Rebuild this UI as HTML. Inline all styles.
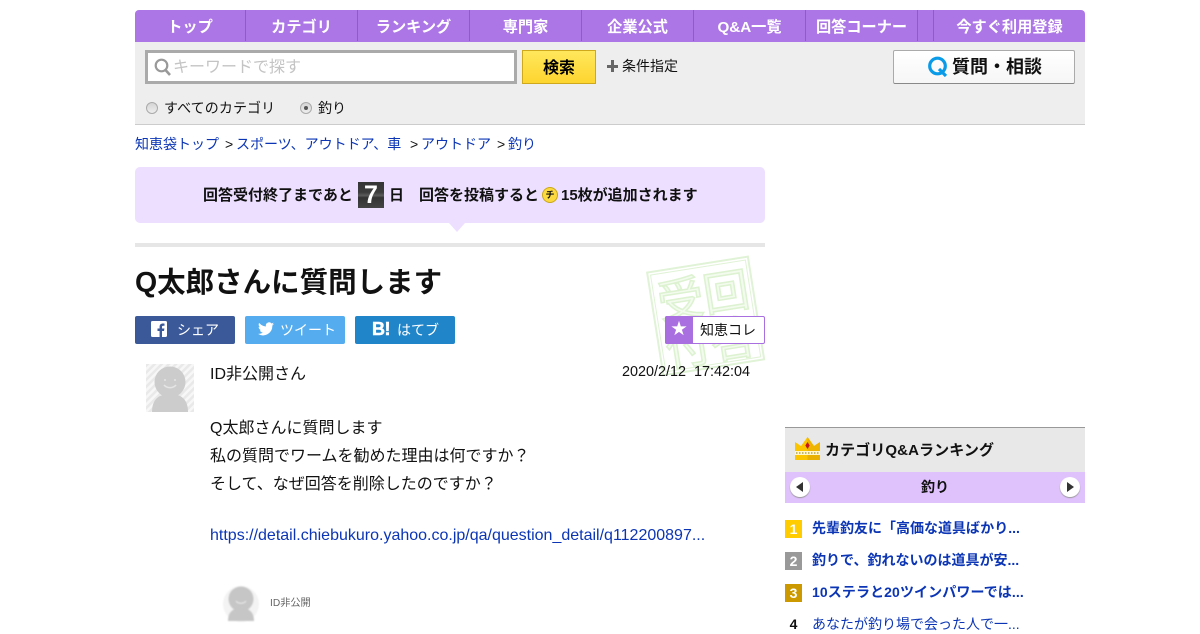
<!DOCTYPE html>
<html lang="ja"><head><meta charset="utf-8"><title>Q太郎さんに質問します</title>
<style>
html,body{margin:0;padding:0;background:#fff}
body{width:1200px;height:630px;overflow:hidden;position:relative;font-family:"Liberation Sans","Noto Sans CJK JP",sans-serif;color:#111}
.a{position:absolute;white-space:nowrap}
a{color:#0b35b5;text-decoration:none}
.nav{left:135px;top:10px;width:950px;height:32px;background:#ad76e6;border-radius:4px 4px 0 0}
.nav b{position:absolute;top:0;line-height:35px;font-size:15.2px;color:#fff;text-align:center;white-space:nowrap}
.nav i{position:absolute;top:0;width:1px;height:31px;background:#8f5cc6}
.rad{width:10px;height:10px;border:1px solid #aaa;border-radius:50%;background:linear-gradient(#d5d5d5,#eee)}
.sb{top:316px;height:28px;width:100px;border-radius:2px;color:#fff;font-size:14px;line-height:29px}
.rk{left:785px;width:17px;height:18px;color:#fff;font-weight:bold;font-size:14px;line-height:19px;text-align:center}
.rt{left:812px;font-size:14px;line-height:20px}
</style></head><body>
<div class="a nav">
<b style="left:0;width:110px">トップ</b><i style="left:110px"></i>
<b style="left:111px;width:111px">カテゴリ</b><i style="left:222px"></i>
<b style="left:223px;width:111px">ランキング</b><i style="left:334px"></i>
<b style="left:335px;width:111px">専門家</b><i style="left:446px"></i>
<b style="left:447px;width:111px">企業公式</b><i style="left:558px"></i>
<b style="left:559px;width:111px">Q&amp;A一覧</b><i style="left:670px"></i>
<b style="left:671px;width:111px">回答コーナー</b><i style="left:782px"></i><i style="left:798px"></i>
<b style="left:799px;width:151px">今すぐ利用登録</b>
</div>
<div class="a" style="left:135px;top:42px;width:950px;height:82px;background:#eee;border-bottom:1px solid #ccc"></div>
<div class="a" style="left:145px;top:50px;width:366px;height:28px;border:3px solid #aaa;background:#fff"></div>
<svg class="a" style="left:154px;top:58px" width="18" height="18" viewBox="0 0 18 18"><circle cx="7.500" cy="7.500" r="5.800" fill="none" stroke="#999" stroke-width="2.200"/><path d="M11.500 12L16 17" stroke="#999" stroke-width="2.600"/></svg>
<div class="a" style="left:173px;top:57px;font-size:16px;line-height:22px;color:#c4c4c4">キーワードで探す</div>
<div class="a" style="left:522px;top:50px;width:72px;height:32px;border:1px solid #d0a81c;background:linear-gradient(#ffe75c,#fdd52f);text-align:center;font-weight:bold;font-size:16px;line-height:35px;color:#000">検索</div>
<div class="a" style="left:607px;top:64.500px;width:11px;height:3px;background:#666"></div>
<div class="a" style="left:611px;top:60px;width:3px;height:12px;background:#666"></div>
<div class="a" style="left:622px;top:56px;font-size:14px;line-height:20px">条件指定</div>
<div class="a" style="left:893px;top:50px;width:180px;height:32px;border:1px solid #aaa;border-bottom:1px solid #888;border-radius:2px;background:linear-gradient(#fff,#f6f6f6)"></div>
<svg class="a" style="left:927px;top:56px" width="22" height="22" viewBox="0 0 22 22"><circle cx="10.500" cy="10" r="7.800" fill="none" stroke="#0a9be8" stroke-width="3.200"/><path d="M12 13l7 7" stroke="#0a9be8" stroke-width="3.200"/></svg>
<div class="a" style="left:952px;top:55px;font-size:18px;line-height:24px;font-weight:bold">質問・相談</div>
<div class="a rad" style="left:146px;top:102px"></div>
<div class="a" style="left:164px;top:98px;font-size:14px;line-height:20px;letter-spacing:.1px">すべてのカテゴリ</div>
<div class="a rad" style="left:300px;top:102px"></div>
<div class="a" style="left:304px;top:106px;width:4px;height:4px;border-radius:50%;background:#555"></div>
<div class="a" style="left:318px;top:98px;font-size:14px;line-height:20px">釣り</div>

<div class="a" style="left:135px;top:134px;font-size:14px;line-height:20px"><a>知恵袋トップ</a></div>
<div class="a" style="left:225px;top:134px;font-size:14px;line-height:20px">&gt;</div>
<div class="a" style="left:236px;top:134px;font-size:14px;line-height:20px;text-spacing-trim:space-all"><a>スポーツ、アウトドア、車</a></div>
<div class="a" style="left:410px;top:134px;font-size:14px;line-height:20px">&gt;</div>
<div class="a" style="left:421px;top:134px;font-size:14px;line-height:20px"><a>アウトドア</a></div>
<div class="a" style="left:497px;top:134px;font-size:14px;line-height:20px">&gt;</div>
<div class="a" style="left:508px;top:134px;font-size:14px;line-height:20px"><a>釣り</a></div>

<div class="a" style="left:135px;top:167px;width:630px;height:56px;background:#eddfff;border-radius:5px"></div>
<div class="a" style="left:449px;top:223px;width:0;height:0;border-left:8px solid transparent;border-right:8px solid transparent;border-top:9px solid #eddfff"></div>
<div class="a" style="left:203px;top:185px;font-size:15px;line-height:21px;font-weight:bold">回答受付終了まであと</div>
<div class="a" style="left:358px;top:182px;width:26px;height:26px;background:linear-gradient(#353535 0,#3d3d3d 40%,#5c5c5c 52%,#333 60%,#444 100%);color:#fff;font-weight:bold;font-size:25px;line-height:27px;text-align:center">7</div>
<div class="a" style="left:389px;top:185px;font-size:15px;line-height:21px;font-weight:bold">日</div>
<div class="a" style="left:419px;top:185px;font-size:15px;line-height:21px;font-weight:bold">回答を投稿すると</div>
<div class="a" style="left:542px;top:187px;width:14px;height:14px;border:1px solid #c9a818;border-radius:50%;background:#fcd93e;font-size:9px;line-height:15px;text-align:center;font-weight:bold">チ</div>
<div class="a" style="left:561px;top:185px;font-size:15px;line-height:21px;font-weight:bold">15枚が追加されます</div>
<div class="a" style="left:135px;top:243px;width:630px;height:4px;background:#e6e6e6"></div>

<svg class="a" style="left:640px;top:250px" width="130" height="125" viewBox="0 0 130 125"><g transform="rotate(-9 65 62)" fill="none" stroke="#e0f3d6" stroke-width="2"><rect x="14" y="14" width="102" height="104"/><rect x="17" y="17" width="96" height="98" stroke-width="1"/></g>
<g transform="rotate(-9 65 62)" font-family="Liberation Sans,Noto Sans CJK JP,sans-serif" font-size="46" fill="#f3fbee" stroke="#dcf2d0" stroke-width="1.500"><text x="20" y="62">受</text><text x="66" y="62">回</text><text x="20" y="110">付</text><text x="66" y="110">答</text></g></svg>

<div class="a" style="left:135px;top:264px;font-size:28.500px;line-height:38px;font-weight:bold">Q太郎さんに質問します</div>

<div class="a sb" style="left:135px;background:#3b5998"><svg class="a" style="left:16px;top:5px" width="16" height="16" viewBox="0 0 16 16"><rect width="16" height="16" rx="1.500" fill="#fff"/><path d="M11 16V10h2l.4-2.500H11V6c0-.8.3-1.200 1.200-1.200h1.300V2.600c-.5-.1-1.100-.1-1.700-.1C10 2.500 8.600 3.600 8.600 5.600v1.900H6.500V10h2.100v6z" fill="#3b5998"/></svg><span class="a" style="left:42px">シェア</span></div>
<div class="a sb" style="left:245px;background:#55acee"><svg class="a" style="left:13px;top:6px" width="16" height="14" viewBox="0 0 24 20"><path d="M24 2.400c-.9.400-1.800.7-2.800.8 1-.6 1.800-1.600 2.200-2.700-1 .6-2 1-3.100 1.200A4.900 4.900 0 0 0 11.900 6.200C7.800 6 4.200 4 1.700.9c-1.300 2.200-.7 5.100 1.500 6.600-.8 0-1.600-.2-2.200-.6 0 2.400 1.700 4.400 3.900 4.900-.7.200-1.500.2-2.200.1.600 2 2.400 3.400 4.600 3.400A9.900 9.900 0 0 1 0 17.300 14 14 0 0 0 21.500 4.900c1-.7 1.800-1.500 2.500-2.500z" fill="#fff"/></svg><span class="a" style="left:35px">ツイート</span></div>
<div class="a sb" style="left:355px;background:#2185c9"><span class="a" style="left:17px;font-weight:bold;font-size:18px;line-height:26px;letter-spacing:-.5px;-webkit-text-stroke:.5px #fff">B!</span><span class="a" style="left:42px">はてブ</span></div>

<div class="a" style="left:665px;top:316px;width:98px;height:26px;border:1px solid #a96ee0;border-radius:2px;background:#fff"></div>
<div class="a" style="left:665px;top:316px;width:28px;height:28px;background:#a96ee0;border-radius:2px 0 0 2px;color:#fff;font-size:16px;line-height:28px;text-align:center">★</div>
<div class="a" style="left:700px;top:320px;font-size:14px;line-height:20px">知恵コレ</div>

<svg class="a" style="left:146px;top:364px" width="48" height="48" viewBox="0 0 48 48"><defs><pattern id="h" width="5" height="5" patternUnits="userSpaceOnUse" patternTransform="rotate(45)"><rect width="5" height="5" fill="#f7f7f7"/><rect width="2.500" height="5" fill="#e9e9e9"/></pattern></defs><rect width="48" height="48" fill="url(#h)"/><circle cx="24" cy="18" r="15.500" fill="#ccc"/><path d="M6 48c0-12 6-18 18-18s18 6 18 18z" fill="#ccc"/><path d="M18 21c3 3.500 9 3.500 12 0" stroke="#e5e5e5" stroke-width="1.500" fill="none"/><circle cx="19" cy="16" r="1" fill="#e5e5e5"/><circle cx="29" cy="16" r="1" fill="#e5e5e5"/></svg>

<div class="a" style="left:210px;top:364px;font-size:16px;line-height:22px">ID非公開さん</div>
<div class="a" style="left:622px;top:362px;font-size:14.400px;line-height:20px">2020/2/12 &nbsp;17:42:04</div>
<div class="a" style="left:210px;top:418px;font-size:16px;line-height:22px">Q太郎さんに質問します</div>
<div class="a" style="left:210px;top:446px;font-size:16px;line-height:22px">私の質問でワームを勧めた理由は何ですか？</div>
<div class="a" style="left:210px;top:474px;font-size:16px;line-height:22px">そして、なぜ回答を削除したのですか？</div>
<div class="a" style="left:210px;top:525px;font-size:16px;line-height:22px"><a>https://detail.chiebukuro.yahoo.co.jp/qa/question_detail/q112200897...</a></div>

<svg class="a" style="left:222px;top:585px;filter:blur(.7px)" width="40" height="38" viewBox="0 0 40 38"><circle cx="19" cy="19" r="18" fill="#f3f3f3"/><circle cx="19" cy="14" r="12.500" fill="#c6c6c6"/><path d="M6 36c0-9 5-13 13-13s13 4 13 13z" fill="#c6c6c6"/><path d="M14 16c2 3 8 3 10 0" stroke="#eee" fill="none"/></svg>
<div class="a" style="left:270px;top:597px;font-size:10.200px;line-height:14px;color:#666;filter:blur(.3px)">ID非公開</div>

<div class="a" style="left:785px;top:427px;width:300px;height:44px;background:#e8e8e8;border-top:1px solid #999"></div>
<svg class="a" style="left:795px;top:436px" width="25" height="25" viewBox="0 0 25 25"><path d="M0 15V6l6 4 6.500-9 6.500 9 6-4v9z" fill="#fbc600"/><path d="M12.500 1l6.500 9 6-4v9H12.500z" fill="#eeb400"/><rect y="15" width="25" height="9" fill="#fbc600"/><rect x="12.500" y="15" width="12.500" height="9" fill="#e9b000"/><rect y="15" width="25" height="4" fill="#fff6cc"/><path d="M1 17h23" stroke="#8a7a10" stroke-width="1" stroke-dasharray="1.500 1.500"/><path d="M12.500 6l2.200 3.500-2.200 3.500-2.200-3.500z" fill="#c4161c"/></svg>
<div class="a" style="left:825px;top:441px;font-size:15px;line-height:20px;font-weight:bold;letter-spacing:.1px">カテゴリQ&amp;Aランキング</div>
<div class="a" style="left:785px;top:472px;width:300px;height:31px;background:#dfc1fc"></div>
<div class="a" style="left:790px;top:477px;width:20px;height:20px;border-radius:50%;background:#fff;box-shadow:0 1px 1px #999"></div>
<div class="a" style="left:796px;top:482px;width:0;height:0;border-top:5px solid transparent;border-bottom:5px solid transparent;border-right:7px solid #333"></div>
<div class="a" style="left:1060px;top:477px;width:20px;height:20px;border-radius:50%;background:#fff;box-shadow:0 1px 1px #999"></div>
<div class="a" style="left:1067px;top:482px;width:0;height:0;border-top:5px solid transparent;border-bottom:5px solid transparent;border-left:7px solid #333"></div>
<div class="a" style="left:785px;top:477px;width:300px;text-align:center;font-size:14px;line-height:20px;font-weight:bold">釣り</div>

<div class="a rk" style="top:520px;background:#fc0">1</div><div class="a rt" style="top:518px"><a><b>先輩釣友に「高価な道具ばかり...</b></a></div>
<div class="a rk" style="top:552px;background:#999">2</div><div class="a rt" style="top:550px"><a><b>釣りで、釣れないのは道具が安...</b></a></div>
<div class="a rk" style="top:584px;background:#c90">3</div><div class="a rt" style="top:582px;letter-spacing:.1px"><a><b>10ステラと20ツインパワーでは...</b></a></div>
<div class="a rk" style="top:615px;color:#111">4</div><div class="a rt" style="top:614px"><a>あなたが釣り場で会った人で一...</a></div>
</body></html>
